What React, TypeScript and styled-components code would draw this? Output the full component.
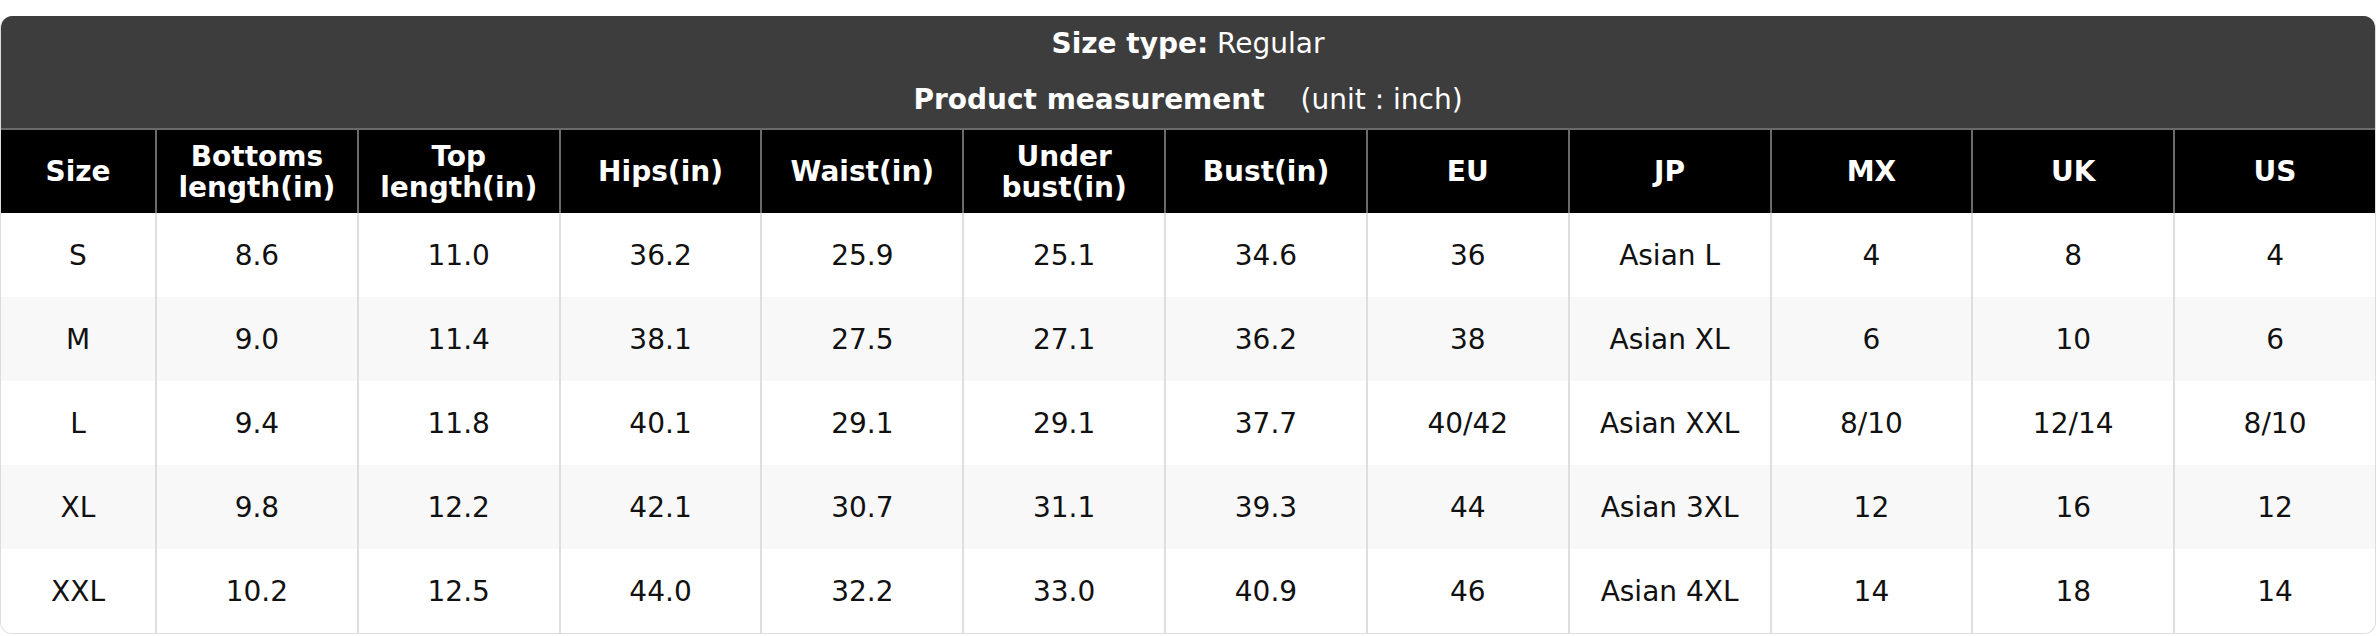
import React from "react";
import styled, { createGlobalStyle } from "styled-components";

const GlobalStyle = createGlobalStyle`
  body {
    margin: 0;
    background: #ffffff;
    font-family: "DejaVu Sans", "Liberation Sans", sans-serif;
  }
`;

const Page = styled.div`
  padding-top: 16px;
`;

const Card = styled.section`
  border-radius: 12px;
  overflow: hidden;
  border: 1px solid #dcdcdc;
  border-top: none;
  background: #ffffff;
`;

const Banner = styled.header`
  display: flex;
  flex-direction: column;
  align-items: center;
  background: #3d3d3d;
  color: #ffffff;
  font-size: 28px;
  padding: 10px 0 10px;
`;

const BannerLine = styled.div<{ $gap?: number }>`
  line-height: 36px;
  margin-top: ${(p) => p.$gap ?? 0}px;
  white-space: nowrap;
`;

const Strong = styled.b`
  font-weight: 700;
`;

const Unit = styled.span`
  margin-left: 36px;
`;

const Table = styled.table`
  width: 100%;
  border-collapse: separate;
  border-spacing: 0;
  table-layout: fixed;
  font-size: 28px;
`;

const HeadCell = styled.th<{ $first?: boolean }>`
  box-sizing: border-box;
  height: 85px;
  padding: 0 6px;
  background: #000000;
  color: #ffffff;
  font-weight: 700;
  line-height: 31px;
  text-align: center;
  border-top: 2px solid #6a6a6a;
  border-left: ${(p) => (p.$first ? "none" : "2px solid #6a6a6a")};
`;

const Row = styled.tr<{ $alt: boolean }>`
  background: ${(p) => (p.$alt ? "#f8f8f8" : "#ffffff")};
`;

const Cell = styled.td<{ $first?: boolean }>`
  box-sizing: border-box;
  height: 84px;
  padding: 0;
  color: #111111;
  text-align: center;
  border-left: ${(p) => (p.$first ? "none" : "2px solid #dedede")};
`;

const headers = [
  ["Size"],
  ["Bottoms", "length(in)"],
  ["Top", "length(in)"],
  ["Hips(in)"],
  ["Waist(in)"],
  ["Under", "bust(in)"],
  ["Bust(in)"],
  ["EU"],
  ["JP"],
  ["MX"],
  ["UK"],
  ["US"],
];

const rows = [
  ["S", "8.6", "11.0", "36.2", "25.9", "25.1", "34.6", "36", "Asian L", "4", "8", "4"],
  ["M", "9.0", "11.4", "38.1", "27.5", "27.1", "36.2", "38", "Asian XL", "6", "10", "6"],
  ["L", "9.4", "11.8", "40.1", "29.1", "29.1", "37.7", "40/42", "Asian XXL", "8/10", "12/14", "8/10"],
  ["XL", "9.8", "12.2", "42.1", "30.7", "31.1", "39.3", "44", "Asian 3XL", "12", "16", "12"],
  ["XXL", "10.2", "12.5", "44.0", "32.2", "33.0", "40.9", "46", "Asian 4XL", "14", "18", "14"],
];

const App = () => {
  return (
    <Page>
      <GlobalStyle />
      <Card>
        <Banner>
          <BannerLine>
            <Strong>Size type:</Strong> Regular
          </BannerLine>
          <BannerLine $gap={20}>
            <Strong>Product measurement</Strong>
            <Unit>(unit : inch)</Unit>
          </BannerLine>
        </Banner>
        <Table>
          <colgroup>
            <col style={{ width: 154 }} />
            {headers.slice(1).map((_, i) => (
              <col key={i} />
            ))}
          </colgroup>
          <thead>
            <tr>
              {headers.map((h, i) => (
                <HeadCell key={i} $first={i === 0}>
                  {h.map((part, j) => (
                    <React.Fragment key={j}>
                      {j > 0 && <br />}
                      {part}
                    </React.Fragment>
                  ))}
                </HeadCell>
              ))}
            </tr>
          </thead>
          <tbody>
            {rows.map((r, i) => (
              <Row key={i} $alt={i % 2 === 1}>
                {r.map((v, j) => (
                  <Cell key={j} $first={j === 0}>
                    {v}
                  </Cell>
                ))}
              </Row>
            ))}
          </tbody>
        </Table>
      </Card>
    </Page>
  );
};

export default App;
